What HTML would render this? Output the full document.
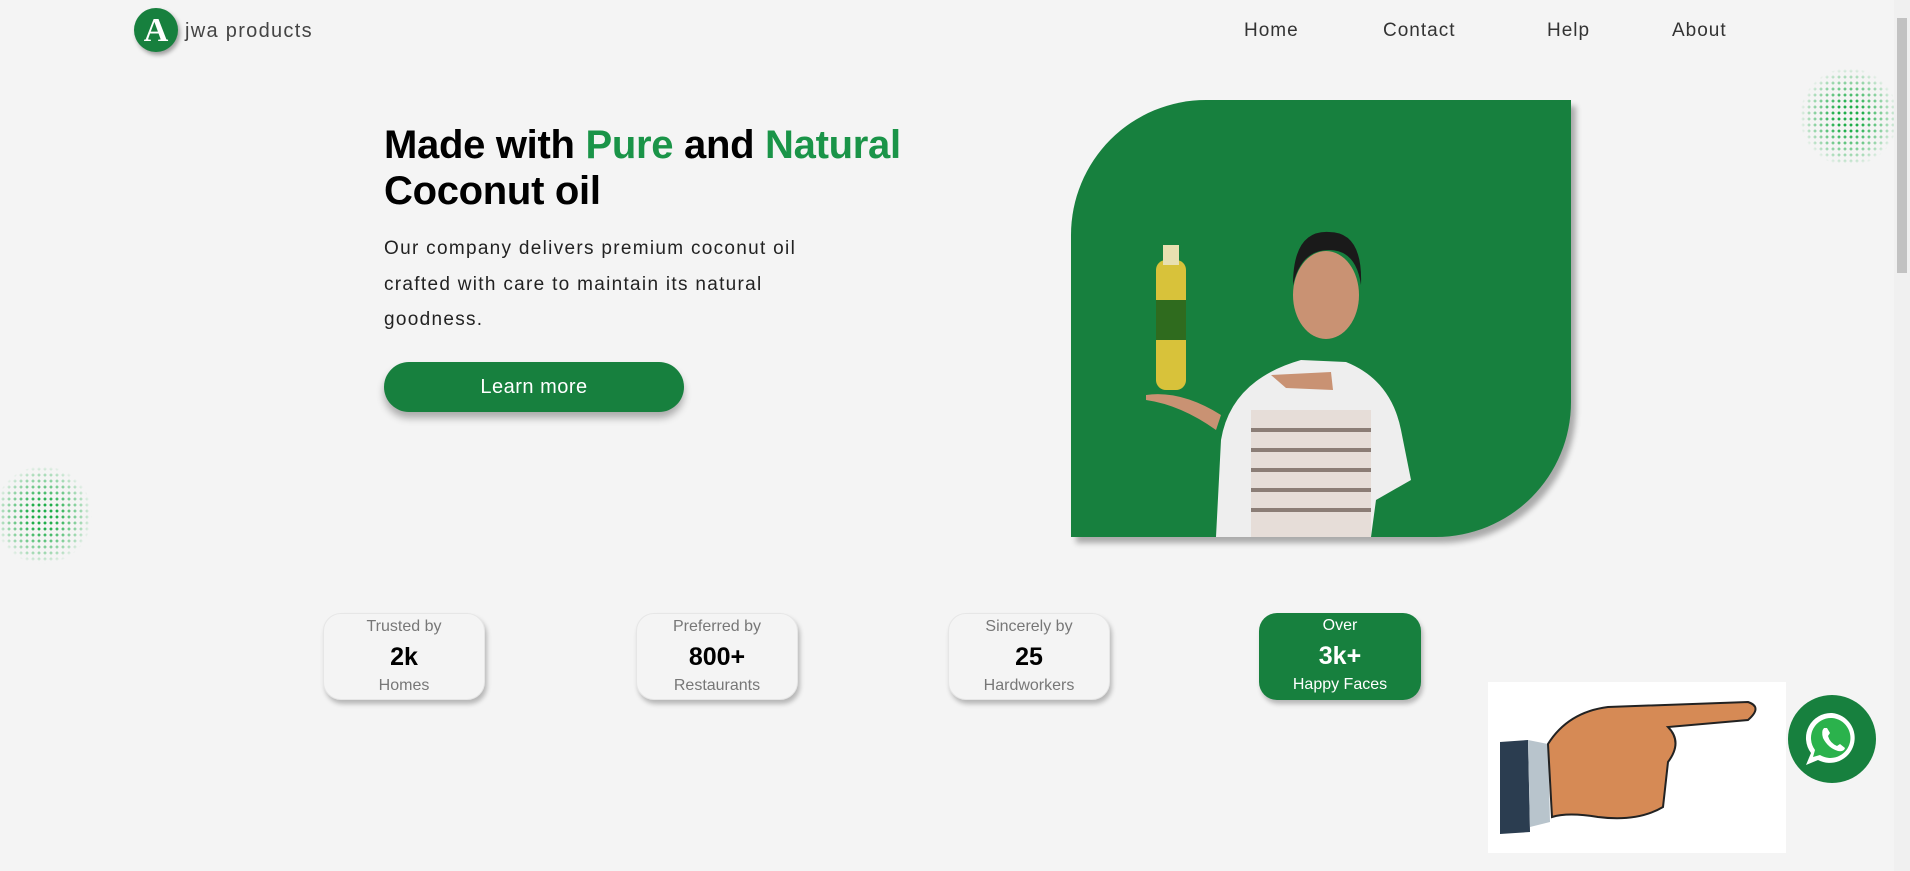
<!DOCTYPE html>
<html><head><meta charset="utf-8"><style>
*{margin:0;padding:0;box-sizing:border-box}
body{width:1910px;height:871px;background:#f4f4f4;font-family:"Liberation Sans",sans-serif;position:relative;overflow:hidden}
.abs{position:absolute}
.nav{top:20px;font-size:19px;color:#333;letter-spacing:1px}
h1{position:absolute;left:384px;top:122px;font-size:40px;line-height:46px;font-weight:bold;color:#000;letter-spacing:-0.3px}
h1 span{color:#1a9448}
.p{left:384px;top:231px;font-size:19px;line-height:35.5px;color:#222;width:460px;letter-spacing:1.3px}
.btn{left:384px;top:362px;width:300px;height:50px;border-radius:25px;background:#17803e;color:#fff;font-size:20px;text-align:center;line-height:50px;box-shadow:0 6px 8px rgba(0,0,0,.3);letter-spacing:.5px}
.card{top:613px;width:162px;height:87px;border-radius:18px;background:#f4f4f4;box-shadow:2px 4px 5px rgba(0,0,0,.25);text-align:center;color:#777;font-size:16px;border:1px solid #e6e6e6}
.card .a{margin-top:3px;line-height:20px}
.card .b{font-size:25px;font-weight:bold;color:#000;line-height:36px;margin-top:2px}
.card .c{line-height:22px}
.g{background:#17803e;color:#fff;border:none}
.g .b{color:#fff}
.dots{border-radius:50%;background:radial-gradient(circle,#1fae4a 1.3px,transparent 1.6px) 0 0/6px 6px;-webkit-mask:radial-gradient(circle,#000 20%,rgba(0,0,0,.3) 60%,transparent 72%);mask:radial-gradient(circle,#000 20%,rgba(0,0,0,.3) 60%,transparent 72%)}
</style></head><body>
<div class="abs" style="left:134px;top:8px;width:44px;height:44px;border-radius:50%;background:#17803e;box-shadow:2px 3px 4px rgba(0,0,0,.35);color:#fff;font-family:'Liberation Serif',serif;font-weight:bold;font-size:34px;text-align:center;line-height:46px">A</div>
<div class="abs" style="left:185px;top:20px;font-size:20px;color:#444;letter-spacing:1.3px">jwa products</div>
<div class="abs nav" style="left:1244px">Home</div>
<div class="abs nav" style="left:1383px">Contact</div>
<div class="abs nav" style="left:1547px">Help</div>
<div class="abs nav" style="left:1672px">About</div>
<div class="abs dots" style="left:1800px;top:68px;width:98px;height:98px"></div>
<div class="abs dots" style="left:-6px;top:466px;width:98px;height:98px"></div>
<h1>Made with <span>Pure</span> and <span>Natural</span><br>Coconut oil</h1>
<div class="abs p">Our company delivers premium coconut oil crafted with care to maintain its natural goodness.</div>
<div class="abs btn">Learn more</div>
<div class="abs" style="left:1071px;top:100px;width:500px;height:437px;background:#17803e;border-radius:135px 0 135px 0;box-shadow:5px 6px 6px rgba(0,0,0,.3);overflow:hidden">
 <svg width="500" height="437" viewBox="0 0 500 437">
  <rect x="85" y="160" width="30" height="130" rx="10" fill="#d8c23a"/>
  <rect x="92" y="145" width="16" height="20" fill="#e8e0b0"/>
  <rect x="85" y="200" width="30" height="40" fill="#2f6b1e"/>
  <path d="M145 437 L150 340 Q160 280 230 260 L275 262 Q320 280 330 330 L340 380 L305 400 L300 437Z" fill="#eeeeee"/>
  <path d="M180 310 L300 310 L300 437 L180 437Z" fill="#e6ddd8"/>
  <g stroke="#8b7d76" stroke-width="4"><line x1="180" y1="330" x2="300" y2="330"/><line x1="180" y1="350" x2="300" y2="350"/><line x1="180" y1="370" x2="300" y2="370"/><line x1="180" y1="390" x2="300" y2="390"/><line x1="180" y1="410" x2="300" y2="410"/></g>
  <ellipse cx="255" cy="195" rx="33" ry="44" fill="#c99273"/>
  <path d="M222 185 Q222 130 258 132 Q292 132 290 185 Q285 150 258 150 Q230 150 222 185Z" fill="#1a1a1a"/>
  <path d="M75 295 Q110 290 150 315 L145 330 Q110 305 75 300Z" fill="#c99273"/>
  <path d="M200 275 L260 272 L262 290 L215 288Z" fill="#c99273"/>
 </svg>
</div>
<div class="abs card" style="left:323px"><div class="a">Trusted by</div><div class="b">2k</div><div class="c">Homes</div></div>
<div class="abs card" style="left:636px"><div class="a">Preferred by</div><div class="b">800+</div><div class="c">Restaurants</div></div>
<div class="abs card" style="left:948px"><div class="a">Sincerely by</div><div class="b">25</div><div class="c">Hardworkers</div></div>
<div class="abs card g" style="left:1259px"><div class="a">Over</div><div class="b">3k+</div><div class="c">Happy Faces</div></div>
<div class="abs" style="left:1488px;top:682px;width:298px;height:171px;background:#fff">
 <svg width="298" height="171" viewBox="0 0 298 171">
  <path d="M12 60 L40 58 L42 150 L12 152Z" fill="#2b3d50"/>
  <path d="M40 58 L60 62 L62 140 L42 145Z" fill="#b8c4cc"/>
  <path d="M60 62 Q80 30 120 25 L260 20 Q275 25 260 38 L180 45 Q195 60 180 80 L175 125 Q150 140 110 135 Q80 130 64 135Z" fill="#d68a55" stroke="#222" stroke-width="2"/>
 </svg>
</div>
<svg class="abs" style="left:1788px;top:695px" width="88" height="88" viewBox="0 0 88 88">
 <circle cx="44" cy="44" r="44" fill="#17803e"/>
 <path d="M44 18 A25 25 0 1 1 30 65 L18 70 L23 58 A25 25 0 0 1 44 18Z" fill="#fff"/>
 <path d="M44 23 A20 20 0 1 1 32 60 L25 62 L27 55 A20 20 0 0 1 44 23Z" fill="#2bb24c"/>
 <path d="M36 33 Q33 36 35 43 Q40 53 50 56 Q56 57 57 53 L52 49 L49 51 Q42 48 40 41 L42 38 L39 33Z" fill="#fff"/>
</svg>
<div class="abs" style="left:1894px;top:0;width:16px;height:871px;background:#f0f0f0"></div>
<div class="abs" style="left:1897px;top:18px;width:10px;height:255px;background:#c2c2c2"></div>
</body></html>
